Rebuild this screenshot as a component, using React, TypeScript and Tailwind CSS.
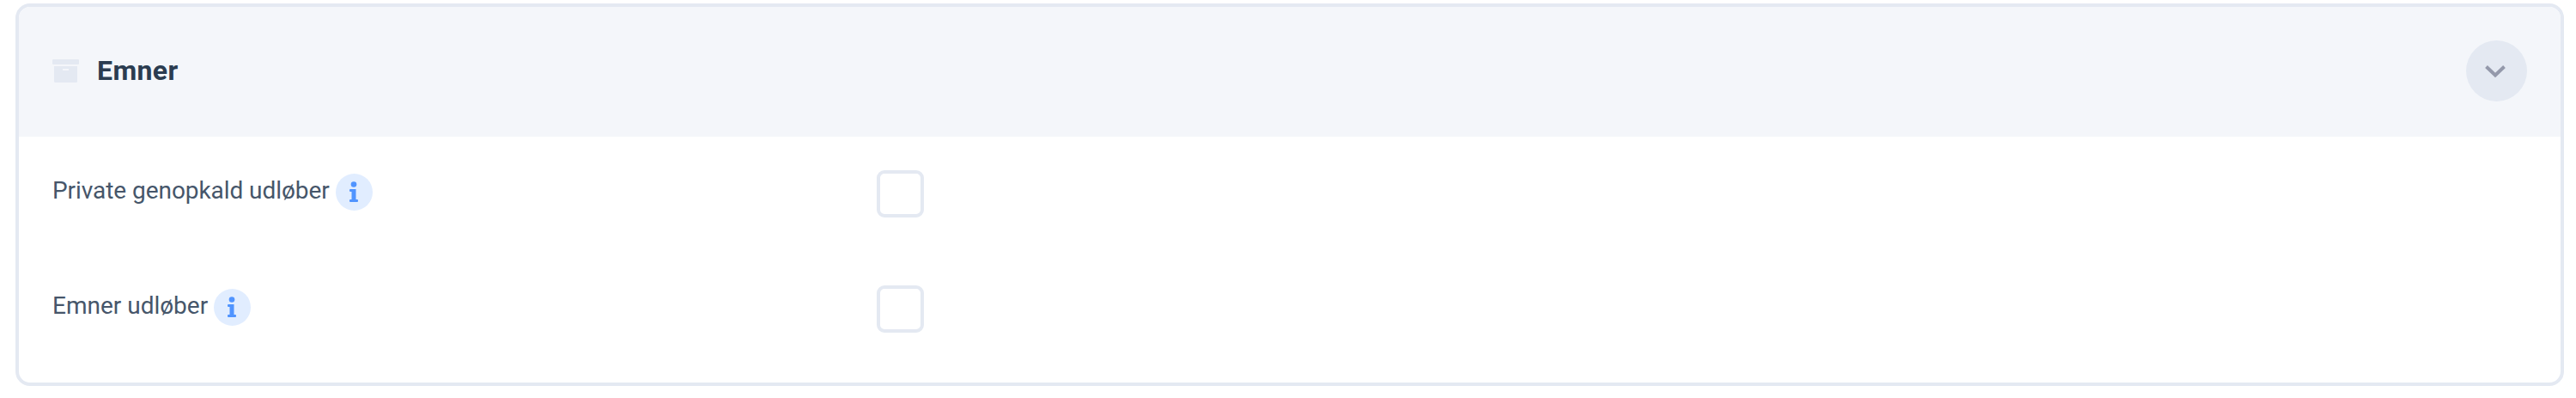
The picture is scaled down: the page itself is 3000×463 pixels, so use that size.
interface SettingRow {
  id: string;
  label: string;
  labelClass: string;
}

const rows: SettingRow[] = [
  { id: 'private', label: 'Private genopkald udløber', labelClass: 'w-[330px] tracking-[-0.06px]' },
  { id: 'leads', label: 'Emner udløber', labelClass: 'w-[188px]' },
];

function ArchiveIcon() {
  return (
    <svg className="h-[27px] w-[31px]" viewBox="0 0 31 27" fill="#e4e9f2">
      <rect width="31" height="6" rx="1" />
      <path fillRule="evenodd" d="M2 8h27v17.5a1.5 1.5 0 0 1-1.5 1.5h-24A1.5 1.5 0 0 1 2 25.500zM12 11v2h7v-2z" />
    </svg>
  );
}

function InfoBadge() {
  return (
    <span className="flex size-[43px] shrink-0 items-center justify-center rounded-full bg-[#e1edff]">
      <svg className="mr-[2px] mb-[2px] h-6 w-[10px]" viewBox="0 0 10 24" fill="#5094ff">
        <circle cx="5" cy="3.500" r="3.300" />
        <path d="M1 9h6.500v12H9q1 0 1 1v1q0 1-1 1H1q-1 0-1-1v-1q0-1 1-1h1.500v-9H1q-1 0-1-1v-1q0-1 1-1z" />
      </svg>
    </span>
  );
}

export default function App() {
  return (
    <div className="h-[463px] bg-white pt-1 pr-[14px] pl-[18px] font-['Roboto',sans-serif]">
      <section className="h-[445px] overflow-hidden rounded-[17px] border-4 border-[#e4e9f2]">
        <header className="flex h-[151px] items-center justify-between bg-[#f4f6fa] pr-[39px] pb-[2px] pl-[39px]">
          <div className="flex items-center gap-[21px]">
            <ArchiveIcon />
            <h2 className="pb-[2px] text-[32px] leading-none font-bold tracking-[0.4px] text-[#2b3c50]">Emner</h2>
          </div>
          <button className="flex size-[71px] items-center justify-center rounded-full bg-[#e4e9f2]">
            <svg className="mr-[3px] h-4 w-6" viewBox="0 0 24 16" fill="none" stroke="#9499ab" strokeWidth="4">
              <path d="M1.500 2.500 12 12.500 22.500 2.500" />
            </svg>
          </button>
        </header>

        <div className="flex flex-col gap-[79px] pt-[39px] pl-[39px]">
          {rows.map(row => (
            <div key={row.id} className="flex h-[55px] items-center">
              <div className="flex w-[960px] items-center pb-1">
                <span className={`${row.labelClass} pb-[3px] text-[28px] leading-none whitespace-nowrap text-[#46566a]`}>
                  {row.label}
                </span>
                <InfoBadge />
              </div>
              <span className="size-[55px] rounded-[9px] border-4 border-[#e4e9f2]" />
            </div>
          ))}
        </div>
      </section>
    </div>
  );
}
